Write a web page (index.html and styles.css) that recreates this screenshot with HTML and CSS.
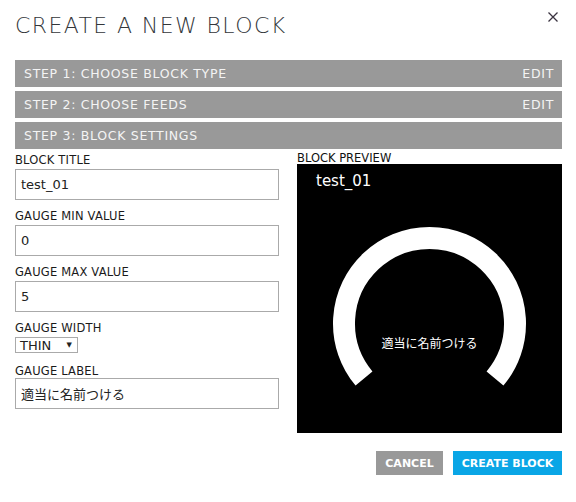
FILE: index.html
```html
<!DOCTYPE html>
<html lang="ja">
<head>
<meta charset="utf-8">
<link rel="stylesheet" href="styles.css">
</head>
<body>
<div class="modal">
  <header class="head">
    <h1 class="title">CREATE A NEW BLOCK</h1>
    <button class="close" aria-label="close">
      <svg width="10" height="10" viewBox="0 0 10 10"><path d="M0.5 0.5 L9.5 9.5 M9.5 0.5 L0.5 9.5" stroke="#3a3340" stroke-width="1.3" fill="none"/></svg>
    </button>
  </header>
  <div class="steps">
    <div class="step"><span>STEP 1: CHOOSE BLOCK TYPE</span><span>EDIT</span></div>
    <div class="step"><span>STEP 2: CHOOSE FEEDS</span><span>EDIT</span></div>
    <div class="step"><span>STEP 3: BLOCK SETTINGS</span></div>
  </div>
  <div class="body">
    <div class="form">
      <label class="lbl">BLOCK TITLE</label>
      <div class="input">test_01</div>
      <label class="lbl">GAUGE MIN VALUE</label>
      <div class="input">0</div>
      <label class="lbl">GAUGE MAX VALUE</label>
      <div class="input">5</div>
      <label class="lbl">GAUGE WIDTH</label>
      <div class="select"><span>THIN</span><span class="tri">▼</span></div>
      <label class="lbl tight">GAUGE LABEL</label>
      <div class="input jp">適当に名前つける</div>
    </div>
    <div class="preview">
      <div class="plbl">BLOCK PREVIEW</div>
      <div class="pbox">
        <div class="ptitle">test_01</div>
        <svg class="gauge" width="265" height="269" viewBox="0 0 265 269">
          <path d="M67.0 214.5 A85.5 85.5 0 1 1 198.0 214.5" fill="none" stroke="#fff" stroke-width="22"/>
        </svg>
        <div class="glabel">適当に名前つける</div>
      </div>
    </div>
  </div>
  <div class="foot">
    <button class="btn cancel">CANCEL</button>
    <button class="btn create">CREATE BLOCK</button>
  </div>
</div>
</body>
</html>
```
FILE: styles.css
```css
* { box-sizing: border-box; }
html, body { margin: 0; padding: 0; background: #fff; }
body { font-family: "DejaVu Sans", "Noto Sans CJK JP", sans-serif; color: #222; width: 576px; height: 502px; overflow: hidden; }
.modal { padding: 0 14px 0 15px; }
.head { display: flex; justify-content: space-between; align-items: flex-start; height: 60px; }
.title { margin: 0; padding-top: 10px; font-weight: 200; font-size: 22px; line-height: 32px; letter-spacing: 1.4px; color: #33363a; }
.close { border: 0; background: none; padding: 0; margin: 12px 4px 0 0; width: 10px; height: 10px; display: block; }
.close svg { display: block; }
.steps { display: flex; flex-direction: column; gap: 4px; }
.step { background: #999; color: #f4f4f4; height: 27px; display: flex; justify-content: space-between; align-items: center; padding: 0 8px 0 9px; font-size: 12.5px; letter-spacing: 0.7px; }
.body { display: flex; gap: 18px; margin-top: 4px; }
.form { width: 264px; display: flex; flex-direction: column; }
.lbl { font-size: 11.5px; line-height: 12px; margin-top: 1px; margin-bottom: 3px; color: #1a1a1a; letter-spacing: 0.2px; display: block; }
.lbl.tight { margin-bottom: 1px; }
.input { height: 31px; border: 1px solid #aaa; padding: 0 5px; display: flex; align-items: center; font-size: 13px; margin-bottom: 9px; color: #222; }
.input.jp { font-family: "Noto Sans CJK JP", sans-serif; font-size: 13px; }
.select { width: 63px; height: 16px; border: 1px solid #aaa; display: flex; align-items: center; justify-content: space-between; padding: 0 5px 0 4px; font-size: 13px; margin-bottom: 11px; }
.tri { font-size: 7px; }
.preview { width: 265px; }
.plbl { font-size: 11.5px; line-height: 12px; color: #111; margin-top: -1px; margin-bottom: 0; }
.pbox { position: relative; width: 265px; height: 269px; background: #000; }
.ptitle { color: #fff; font-size: 15px; padding: 8px 0 0 19px; }
.gauge { position: absolute; left: 0; top: 0; }
.glabel { position: absolute; left: 0; right: 0; top: 170px; text-align: center; color: #fff; font-family: "Noto Sans CJK JP", sans-serif; font-size: 12px; }
.foot { display: flex; justify-content: flex-end; gap: 10px; margin-top: 18px; }
.btn { border: 0; color: #fff; font-family: "DejaVu Sans", sans-serif; font-weight: 700; font-size: 11px; height: 24px; padding: 0; }
.cancel { background: #999; width: 67px; }
.create { background: #0aa6e6; width: 109px; }
```
